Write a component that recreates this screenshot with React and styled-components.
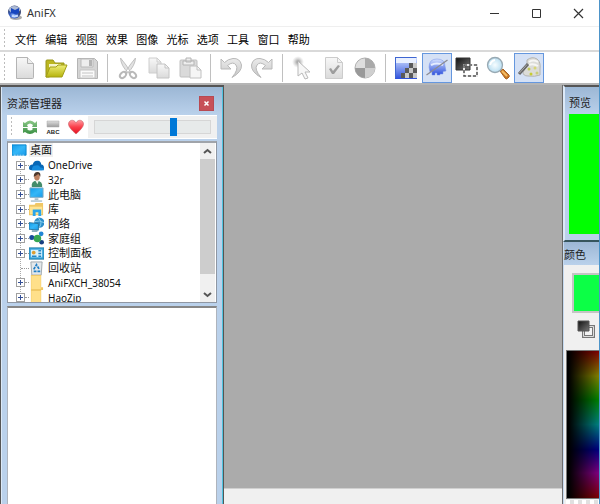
import React from "react";
import styled, { createGlobalStyle, css } from "styled-components";

const latin = '"Noto Sans", "Noto Sans CJK SC", sans-serif';

const GlobalStyle = createGlobalStyle`
  *, *::before, *::after { box-sizing: border-box; }
  html, body, #root { height: 100%; }
  body {
    margin: 0;
    overflow: hidden;
    background: #fff;
    color: #111;
    font: 11px/14px ${latin};
  }
  button, input { margin: 0; padding: 0; border: 0; font: inherit; color: inherit; background: none; }
  ul { margin: 0; padding: 0; list-style: none; }
  h1, h2 { margin: 0; font-size: 11px; font-weight: 400; }
  svg { display: block; flex: none; }
`;

const Window = styled.div`
  height: 100vh;
  display: flex;
  flex-direction: column;
  border-right: 1px solid #4d94c9;
  overflow: hidden;
`;

const TitleBar = styled.header`
  flex: none;
  height: 27px;
  display: flex;
  align-items: center;
  padding-left: 7px;
  border-bottom: 1px solid #efefef;
`;

const AppTitle = styled.h1`
  flex: 1;
  padding-left: 4px;
  line-height: 24px;
  color: #333;
`;

const CaptionButton = styled.button`
  width: 42px;
  height: 24px;
  display: grid;
  place-items: center;
  color: #333;
`;

const Grip = styled.span`
  flex: none;
  width: 1px;
  align-self: stretch;
  margin: 2px 1px 2px 0;
  background: repeating-linear-gradient(#bcbcbc 0 2px, transparent 2px 4px);
`;

const MenuBar = styled.nav`
  flex: none;
  height: 25px;
  display: flex;
  align-items: center;
  padding-left: 4px;
  border-bottom: 2px solid #d9d9d9;
`;

const MenuList = styled.ul`
  width: 303px;
  margin-left: 9px;
  padding-top: 2px;
  display: grid;
  grid-template-columns: repeat(10, 1fr);
`;

const MenuButton = styled.button`
  line-height: 20px;
  white-space: nowrap;
  color: #000;
`;

const ToolBar = styled.div`
  flex: none;
  height: 33px;
  display: flex;
  align-items: center;
  padding-left: 4px;
  border-bottom: 2px solid #b5b5b5;
`;

const ToolGroup = styled.div`
  width: ${(p) => p.$width}px;
  display: grid;
  grid-template-columns: repeat(${(p) => p.$count}, 1fr);
  justify-items: center;
  &:nth-child(2) { margin-left: 4px; }
`;

const ToolButton = styled.button`
  width: 30px;
  height: 30px;
  display: grid;
  place-items: center;
  border: 1px solid transparent;
  ${(p) => p.$pressed && css`
    background: #d5e1f5;
    border-color: #6597de;
  `}
`;

const Separator = styled.span`
  width: 1px;
  height: 28px;
  margin: 0 5px;
  background: #c0c0c0;
`;

const Workspace = styled.div`
  flex: 1;
  min-height: 0;
  display: flex;
`;

const Explorer = styled.aside`
  flex: none;
  width: 224px;
  display: flex;
  flex-direction: column;
  padding: 0 6px;
  background: linear-gradient(#9cb7d5, #bad1eb 28px);
  border: 1px solid #555;
  border-width: 2px 1px 0 1px;
  box-shadow: inset 1px 0 #dce9f7, inset -1px 0 #4fc3df;
`;

const PanelHeader = styled.div`
  flex: none;
  height: ${(p) => p.$height}px;
  display: flex;
  align-items: center;
  justify-content: space-between;
  padding: 5px 3px 0 0;
`;

const PanelTitle = styled.h2`
  white-space: nowrap;
  color: #222;
`;

const CloseButton = styled.button`
  width: 15px;
  height: 15px;
  display: grid;
  place-items: center;
  background: #c75058;
  border: 1px solid #b84952;
`;

const ExplorerTools = styled.div`
  flex: none;
  height: 24px;
  display: flex;
  align-items: center;
  padding-left: 4px;
  background: #fff;
`;

const SmallTool = styled.button`
  width: 23px;
  height: 22px;
  display: grid;
  place-items: center;
  &:nth-of-type(1) { margin-left: 5px; }
`;

const SizeField = styled.label`
  flex: 1;
  height: 22px;
  display: flex;
  align-items: center;
  margin-left: 1px;
  padding: 0 6px;
  background: #f0f0f0;
`;

const Slider = styled.input`
  width: 100%;
  height: 18px;
  appearance: none;
  &::-webkit-slider-runnable-track {
    height: 14px;
    background: #e7eaea;
    border: 1px solid #d6d6d6;
  }
  &::-webkit-slider-thumb {
    appearance: none;
    width: 7px;
    height: 18px;
    margin-top: -3px;
    background: #0078d7;
  }
`;

const TreeBox = styled.div`
  flex: none;
  height: 162px;
  margin-top: 2px;
  display: flex;
  background: #fff;
  border: 1px solid #8f97a3;
  border-top: 2px solid #a0a4aa;
  overflow: hidden;
`;

const Tree = styled.ul`
  flex: 1;
  height: 162px;
  display: grid;
  grid-template-rows: repeat(11, 1fr);
  background: linear-gradient(#fff, #fff) 0 0 / 100% 15px no-repeat,
    repeating-linear-gradient(#aaa 0 1px, transparent 1px 2px) 12px 0 / 1px 100% no-repeat;
`;

const TreeItem = styled.li`
  display: flex;
  align-items: center;
  min-height: 0;
  padding-left: ${(p) => (p.$root ? 4 : 8)}px;
`;

const Expander = styled.button`
  flex: none;
  width: 9px;
  height: 9px;
  display: grid;
  place-items: center;
  background: ${(p) => (p.$leaf ? "none" : "#fff")};
  border: 1px solid ${(p) => (p.$leaf ? "transparent" : "#a0a0a0")};
`;

const Branch = styled.span`
  width: ${(p) => (p.$leaf ? 8 : 4)}px;
  margin-left: ${(p) => (p.$leaf ? -4 : 0)}px;
  border-top: 1px dotted #999;
`;

const TreeLabel = styled.span`
  margin-left: ${(p) => (p.$root ? 2 : 3)}px;
  padding: 0 1px;
  white-space: nowrap;
  color: #111;
  font-size: ${(p) => (p.$latin ? 10 : 11)}px;
  background: ${(p) => (p.$root ? "#f0f0f0" : "none")};
`;

const ScrollBar = styled.div`
  flex: none;
  width: 15px;
  display: flex;
  flex-direction: column;
  margin-right: 1px;
  background: #f0f0f0;
`;

const ScrollArrow = styled.button`
  height: 16px;
  display: grid;
  place-items: center;
`;

const ScrollTrack = styled.div`
  flex: 1;
  display: flex;
  padding-bottom: 12px;
`;

const ScrollThumb = styled.span`
  flex: 1;
  background: #cdcdcd;
`;

const FileList = styled.section`
  flex: 1;
  margin-top: 3px;
  background: #fff;
  border: 1px solid #aeb4bd;
  border-top: 2px solid #868686;
  border-bottom: 0;
`;

const Canvas = styled.main`
  flex: 1;
  display: flex;
  flex-direction: column;
  justify-content: flex-end;
  background: #ababab;
`;

const StatusBar = styled.footer`
  height: 16px;
  background: #f0f0f0;
  border-top: 1px solid #d0d0d0;
`;

const Dock = styled.aside`
  flex: none;
  width: 37px;
  display: flex;
  flex-direction: column;
  border-left: 1px solid #6c6c6c;
  overflow: hidden;
`;

const PreviewPanel = styled.section`
  flex: none;
  height: 157px;
  display: flex;
  flex-direction: column;
  padding: 0 0 6px 4px;
  background: linear-gradient(#9cb7d5, #bad1eb 28px);
  border-top: 2px solid #555;
  border-bottom: 2px solid #36555d;
  border-left: 2px solid #dce9f7;
`;

const PreviewSurface = styled.div`
  flex: 1;
  background: #00ff00;
`;

const ColorPanel = styled.section`
  flex: 1;
  display: flex;
  flex-direction: column;
  background: #f0f0f0;
  border-left: 1px solid #c6daf0;
`;

const ColorHeader = styled.div`
  flex: none;
  height: 23px;
  padding-top: 6px;
  background: linear-gradient(#9cb7d5, #bad1eb);
`;

const Swatch = styled.button`
  flex: none;
  height: 40px;
  margin: 8px 0 0 8px;
  background: #0cff46;
  border: 2px solid #c4c4c4;
  border-right: 0;
`;

const SwapButton = styled.button`
  align-self: flex-start;
  margin: 6px 0 11px 12px;
`;

const Spectrum = styled.div`
  flex: none;
  height: 149px;
  margin-left: 2px;
  border: 1px solid #777;
  border-right: 0;
  background: linear-gradient(to right, #000 5%, rgba(0, 0, 0, 0.5)),
    linear-gradient(#f00, #ff0 17%, #0f0 33%, #0ff 50%, #00f 67%, #f0f 83%, #f00);
`;

const AlphaStrip = styled.div`
  flex: 1;
  margin: 1px 0 0 2px;
  background: repeating-conic-gradient(#e0e0e0 0 25%, #fff 0 50%) 0 0 / 8px 8px;
`;

const HiddenDefs = styled.svg`
  position: absolute;
`;

const Svg = ({ size = 24, box = 24, children }) => (
  <svg width={size} height={size} viewBox={`0 0 ${box} ${box}`} fill="none" aria-hidden="true">
    {children}
  </svg>
);

const Gradients = () => (
  <HiddenDefs width="0" height="0" aria-hidden="true">
    <defs>
      <linearGradient id="gray" x2="0" y2="1"><stop stopColor="#f8f8f8" /><stop offset="1" stopColor="#dadada" /></linearGradient>
      <linearGradient id="arrow" x2="0" y2="1"><stop stopColor="#ececec" /><stop offset="1" stopColor="#c4c4c4" /></linearGradient>
      <linearGradient id="darkgray" x2="0" y2="1"><stop stopColor="#dedede" /><stop offset="1" stopColor="#9c9c9c" /></linearGradient>
      <linearGradient id="yellow" x2="0" y2="1"><stop stopColor="#efef78" /><stop offset="1" stopColor="#b6b30c" /></linearGradient>
      <linearGradient id="blue" x2="0" y2="1"><stop stopColor="#d5e2ff" /><stop offset="1" stopColor="#2d50dc" /></linearGradient>
      <linearGradient id="ink" x2="1" y2="1"><stop stopColor="#111" /><stop offset="1" stopColor="#777" /></linearGradient>
      <linearGradient id="sky" x2="1" y2="1"><stop stopColor="#139bea" /><stop offset=".5" stopColor="#35b7f7" /><stop offset="1" stopColor="#1a9aea" /></linearGradient>
      <linearGradient id="heart" x2="0" y2="1"><stop stopColor="#ff9ca2" /><stop offset=".5" stopColor="#fa3e49" /><stop offset="1" stopColor="#e31423" /></linearGradient>
      <linearGradient id="green" x2="0" y2="1"><stop stopColor="#8cc888" /><stop offset="1" stopColor="#3a9044" /></linearGradient>
      <radialGradient id="ball" cx=".4" cy=".75"><stop stopColor="#a4c6ff" /><stop offset=".5" stopColor="#315cc8" /><stop offset="1" stopColor="#3b4a78" /></radialGradient>
      <radialGradient id="lens"><stop stopColor="#f7fdff" /><stop offset="1" stopColor="#badff2" /></radialGradient>
      <radialGradient id="spot"><stop stopColor="#666" stopOpacity=".75" /><stop offset="1" stopColor="#aaa" stopOpacity="0" /></radialGradient>
    </defs>
  </HiddenDefs>
);

const Logo = () => (
  <Svg size={16} box={16}>
    <ellipse cx="9" cy="12.500" rx="6" ry="2.500" fill="#aaa" />
    <circle cx="7.500" cy="7" r="6.500" fill="url(#ball)" />
    <path d="M1.500 5Q3 1 7 1q5 0 6.500 4L11 7.500H4z" fill="#b9c6df" opacity=".9" />
    <path d="M4 3l4 2 4-2v5l-4 1-4-1z" fill="#1746bf" />
    <path d="M5 11q3 1 6-.500" stroke="#c6dcff" strokeWidth="2" />
  </Svg>
);

const toolIcons = {
  new: <><path d="M3.500 1.500h11l6 6v14q0 1-1 1h-16z" fill="url(#gray)" stroke="#b4b4b4" /><path d="M14.500 1.500v6h6" fill="#eee" stroke="#b4b4b4" /></>,
  open: <><path d="M2 21V5q0-1 1-1h6l2 3h9v5L5 21z" fill="#bbb620" stroke="#99961a" /><path d="M5 8h12v5H5z" fill="#f5f5c8" /><path d="M2 21l4-10h6l2-2h9l-5 12z" fill="url(#yellow)" stroke="#a29e18" /></>,
  save: <><path d="M2.500 2.500h17l3 3v17h-20z" fill="#d5d5d5" stroke="#b4b4b4" /><path d="M6 3h12v8H6z" fill="#eee" stroke="#bbb" /><path d="M14 4h3v6h-3z" fill="#b4b4b4" /><path d="M5 14h15v8H5z" fill="#fafafa" stroke="#c4c4c4" /><path d="M7 17h11M7 20h11" stroke="#c4c4c4" /></>,
  cut: <><path d="M4.500 2q6 7 10 14l-2 1Q5 10 4.500 2zM19.500 2q-6 7-10 14l2 1Q19 10 19.500 2z" fill="#e2e2e2" stroke="#c0c0c0" /><ellipse cx="7" cy="19" rx="3.500" ry="2.500" transform="rotate(-45 7 19)" stroke="#b9b9b9" strokeWidth="2" /><ellipse cx="17" cy="19" rx="3.500" ry="2.500" transform="rotate(45 17 19)" stroke="#b9b9b9" strokeWidth="2" /></>,
  copy: <><path d="M2 2h8l4 4v11H2z" fill="url(#gray)" stroke="#cecece" /><path d="M10 2v4h4" stroke="#cecece" /><path d="M10 8h8l4 4v10H10z" fill="url(#gray)" stroke="#c4c4c4" /><path d="M18 8v4h4" stroke="#c4c4c4" /></>,
  paste: <><rect x="2" y="4" width="17" height="17" rx="1" fill="#dadada" stroke="#c0c0c0" /><path d="M5 5h11v4H5zM8 2h5v4H8z" fill="#eee" stroke="#b4b4b4" /><path d="M12 10h7l4 4v8H12z" fill="#f5f5f5" stroke="#c0c0c0" /><path d="M19 10v4h4" stroke="#c0c0c0" /></>,
  undo: <path d="M2 3v10h10L8.500 9.500Q14 5 17 9q3 4-4 12.500Q23 16 22.500 9 21 2 14 2.500 9 3 5.500 6.500z" fill="url(#arrow)" stroke="#b9b9b9" />,
  redo: <path d="M22 3v10H12l3.500-3.500Q10 5 7 9q-3 4 4 12.500Q1 16 1.500 9 3 2 10 2.500q5 .5 8.500 4z" fill="url(#arrow)" stroke="#b9b9b9" />,
  pointer: <><circle cx="7" cy="6" r="6" fill="url(#spot)" /><path d="M7 5v15l4-3 3 6 3-1-3-6h5z" fill="#f7f7f7" stroke="#b9b9b9" /></>,
  check: <><path d="M3.500 1.500h12l5 5v16h-17z" fill="url(#gray)" stroke="#ccc" /><path d="M15.500 1.500v5h5" stroke="#ccc" /><path d="M7 13l2-1 2 3 5-6 2 1-6 8h-2z" fill="#9d9d9d" /></>,
  disc: <><circle cx="12" cy="12" r="10" fill="#dedede" stroke="#b0b0b0" /><path d="M12 2v10h10A10 10 0 0 0 12 2z" fill="#aaa" /><path d="M12 12h10a10 10 0 0 1-10 10z" fill="#cfcfcf" /><path d="M12 12H2a10 10 0 0 0 10 10z" fill="#999" /></>,
  gradient: <><path d="M1 1h22v22H1z" fill="url(#blue)" /><path d="M2 2h20v5H2z" fill="#e9f0ff" /><path d="M1.500 1.500h21M1.500 1v21" stroke="#3f66d2" /><path d="M7 22v-5h4v-5h4V7h8v15z" fill="#a8a8a8" /><path d="M15 7h4v5h-4zM11 12h4v5h-4zM7 17h4v5H7zM19 12h4v5h-4zM15 17h4v5h-4z" fill="#5a5a5a" /><path d="M19 7h4v5h-4zM15 12h4v5h-4zM11 17h4v5h-4zM19 17h4v5h-4z" fill="#c8c8c8" /></>,
  smooth: <><path d="M4 11q0-8 8-8 8 0 8 7l1 5-3 .500V18h-3v1h-3v-2h-2v2H7v-3H5z" fill="url(#blue)" stroke="#7894e8" strokeWidth=".5" /><path d="M6 9q6-3 12 0" stroke="#e5edff" strokeWidth="2" /><path d="M1.500 19L22.500 4" stroke="#8b8b93" strokeWidth="1.300" /></>,
  selection: <><path d="M1 2h14v12H1z" fill="url(#ink)" stroke="#333" /><path d="M9 9h13v11H9z" stroke="#e8e8e8" strokeWidth="2" /><path d="M9 9h13v11H9z" stroke="#555" strokeWidth="1.500" strokeDasharray="3 2" /></>,
  zoom: <><path d="M14 15l3-2 6 6q1 2-1 3-2 2-3 0z" fill="#ca7724" stroke="#a56123" /><path d="M16 15l5 5" stroke="#f2bb64" strokeWidth="2" /><circle cx="9" cy="9" r="7.500" fill="url(#lens)" stroke="#98a9b3" strokeWidth="1.300" /><path d="M4 9q1-4 5-5" stroke="#fff" strokeWidth="2" /></>,
  effects: <><path d="M10 4q5-4 10-1 4 3 3 10v6q-5 2-12 1-5 0-5-4l4-6z" fill="#dcdcd8" stroke="#b4b4b0" /><path d="M12 6q4-3 9 0M12 9q4-2 9 1" stroke="#f6f6f4" strokeWidth="2" /><path d="M2 18L11 8" stroke="#666" strokeWidth="3" /><path d="M2.500 17L10 8.500" stroke="#aaa" /><circle cx="12" cy="13" r="1.500" fill="#c3c85a" /><circle cx="18" cy="12" r="1.500" fill="#d7d676" /><circle cx="14" cy="18" r="1.500" fill="#c6cc32" /><circle cx="20" cy="17" r="1.500" fill="#c9cc7a" /></>,
};

const toolGroups = [
  { width: 92, tools: [["new", "新建"], ["open", "打开"], ["save", "保存"]] },
  { width: 92, tools: [["cut", "剪切"], ["copy", "复制"], ["paste", "粘贴"]] },
  { width: 61, tools: [["undo", "撤销"], ["redo", "重做"]] },
  { width: 92, tools: [["pointer", "热点"], ["check", "测试"], ["disc", "对比"]] },
  { width: 153, tools: [["gradient", "渐变"], ["smooth", "平滑", true], ["selection", "选区"], ["zoom", "缩放"], ["effects", "特效", true]] },
];

const treeIcons = {
  desktop: <><path d="M0 2h15v11H0z" fill="url(#sky)" stroke="#0786cf" /><path d="M2 13h11" stroke="#c4eaff" strokeDasharray="2 1" /></>,
  cloud: <><path d="M0 11q0-4 4-4 1-5 6-4 3 1 3 4 3 0 3 4 0 2-2 2H3q-3 0-3-2z" fill="#0767b6" /><path d="M3 13q0-5 4-5 4-1 5 2 4 0 4 3z" fill="#168bdd" /></>,
  user: <><path d="M3 16q-1-6 5-7 7 1 6 7z" fill="#438c6b" /><path d="M6 8l3 5 2-5z" fill="#edf5ef" /><ellipse cx="8.500" cy="5" rx="3" ry="4" fill="#bd8160" /><path d="M5 5q0-5 4-5t3 5l-2-3q-3 2-5 3z" fill="#4c382c" /></>,
  computer: <><path d="M1 1h14v10H1z" fill="url(#sky)" stroke="#7fa9c1" /><path d="M6 12h4v2H6z" fill="#a9bcc7" /><path d="M2 15h12" stroke="#a8bfcd" strokeWidth="1.500" /></>,
  library: <><path d="M0 3h6l1-2h8v13H0z" fill="#f0c765" /><path d="M1 5h13v8H1z" fill="#ffe493" /><path d="M4 15V8h9v7h-3v-4H7v4z" fill="#2aa5ea" /></>,
  network: <><circle cx="11" cy="6" r="5.500" fill="#2c8eca" /><path d="M6 5q5-2 10 1M10 1q5 5 1 10" stroke="#8bd0ed" /><path d="M0 6l10 1v7l-10-1z" fill="url(#sky)" stroke="#2876a1" /><path d="M3 15h6" stroke="#6795ac" strokeWidth="1.500" /></>,
  homegroup: <><circle cx="3" cy="7" r="2.700" fill="#174b9c" /><circle cx="13" cy="3" r="2.500" fill="#2386d5" /><circle cx="13.500" cy="12" r="2.500" fill="#173f82" /><circle cx="9" cy="8" r="4" fill="#35a653" /></>,
  control: <><path d="M0 2h16v12H0z" fill="#38a7df" stroke="#247da8" /><path d="M2 4h12v8H2z" fill="#d8f2fd" /><circle cx="5" cy="7" r="2" fill="#dd9e34" /><path d="M3 11h5M10 5h3M10 8h3M10 11h3" stroke="#2484c4" strokeWidth="1.500" /></>,
  recycle: <><path d="M2 1h12l-1 14H3z" fill="#e4e8eb" stroke="#9ea6ab" /><path d="M5 9l3-5 3 5M5 11h7" stroke="#217fc6" strokeWidth="1.800" strokeDasharray="3 1" /></>,
  folder: <><path d="M2 0h11v13h2v3H2z" fill="#f0c765" /><path d="M2.500 1h10v14h-10z" fill="#ffe08a" /></>,
};

const treeItems = [
  { icon: "desktop", label: "桌面", root: true },
  { icon: "cloud", label: "OneDrive", latin: true },
  { icon: "user", label: "32r", latin: true },
  { icon: "computer", label: "此电脑" },
  { icon: "library", label: "库" },
  { icon: "network", label: "网络" },
  { icon: "homegroup", label: "家庭组" },
  { icon: "control", label: "控制面板" },
  { icon: "recycle", label: "回收站", leaf: true },
  { icon: "folder", label: "AniFXCH_38054", latin: true },
  { icon: "folder", label: "HaoZip", latin: true },
];

const menus = ["文件", "编辑", "视图", "效果", "图像", "光标", "选项", "工具", "窗口", "帮助"];

export default function App() {
  return (
    <Window>
      <GlobalStyle />
      <Gradients />
      <TitleBar>
        <Logo />
        <AppTitle>AniFX</AppTitle>
        <CaptionButton aria-label="最小化"><Svg size={11} box={11}><path d="M1 5.500h9" stroke="currentColor" /></Svg></CaptionButton>
        <CaptionButton aria-label="最大化"><Svg size={11} box={11}><path d="M1.500 1.500h8v8h-8z" stroke="currentColor" /></Svg></CaptionButton>
        <CaptionButton aria-label="关闭"><Svg size={11} box={11}><path d="M1 1l9 9M10 1l-9 9" stroke="currentColor" strokeWidth="1.200" /></Svg></CaptionButton>
      </TitleBar>

      <MenuBar>
        <Grip />
        <MenuList>
          {menus.map((m) => <li key={m}><MenuButton>{m}</MenuButton></li>)}
        </MenuList>
      </MenuBar>

      <ToolBar role="toolbar">
        <Grip />
        {toolGroups.map((group, i) => (
          <React.Fragment key={i}>
            {i > 0 && <Separator />}
            <ToolGroup $width={group.width} $count={group.tools.length}>
              {group.tools.map(([icon, label, pressed]) => (
                <ToolButton key={icon} aria-label={label} $pressed={pressed}>
                  <Svg>{toolIcons[icon]}</Svg>
                </ToolButton>
              ))}
            </ToolGroup>
          </React.Fragment>
        ))}
      </ToolBar>

      <Workspace>
        <Explorer>
          <PanelHeader $height={28}>
            <PanelTitle>资源管理器</PanelTitle>
            <CloseButton aria-label="关闭面板"><Svg size={7} box={7}><path d="M1.500 1.500l4 4M5.500 1.500l-4 4" stroke="#fff" strokeWidth="1.500" /></Svg></CloseButton>
          </PanelHeader>
          <ExplorerTools>
            <Grip />
            <SmallTool aria-label="刷新">
              <Svg size={14} box={14}><path d="M0 7V2l2 1q5-5 10 0l2-2v6H9l1-2Q7 2 4 5l1 2zM14 8v5l-2-1q-5 4-10 0l-2 1V8h5L4 9q3 3 6 0L9 8z" fill="url(#green)" /></Svg>
            </SmallTool>
            <SmallTool aria-label="名称">
              <Svg size={14} box={14}><path d="M1 1h12v6H1z" fill="url(#darkgray)" stroke="#aaa" strokeWidth=".5" /><text x="7" y="13.500" textAnchor="middle" fontFamily="Liberation Sans, sans-serif" fontWeight="700" fontSize="6" fill="#222">ABC</text></Svg>
            </SmallTool>
            <SmallTool aria-label="收藏">
              <Svg size={16} box={16}><path d="M8 15Q1 9 .5 5.500C0 1 6-.500 8 4c2-4.500 8-3 7.500 1.500Q15 9 8 15z" fill="url(#heart)" stroke="#c96066" strokeWidth=".6" /></Svg>
            </SmallTool>
            <SizeField>
              <Slider type="range" min="0" max="100" defaultValue="69" aria-label="缩略图大小" />
            </SizeField>
          </ExplorerTools>
          <TreeBox>
            <Tree>
              {treeItems.map((item) => (
                <TreeItem key={item.label} $root={item.root}>
                  {!item.root && (
                    <>
                      <Expander as={item.leaf ? "span" : "button"} $leaf={item.leaf} aria-label={item.leaf ? undefined : `展开 ${item.label}`}>
                        {!item.leaf && <Svg size={5} box={5}><path d="M0 2.500h5M2.500 0v5" stroke="#344f95" /></Svg>}
                      </Expander>
                      <Branch $leaf={item.leaf} />
                    </>
                  )}
                  <Svg size={15} box={16}>{treeIcons[item.icon]}</Svg>
                  <TreeLabel $root={item.root} $latin={item.latin}>{item.label}</TreeLabel>
                </TreeItem>
              ))}
            </Tree>
            <ScrollBar>
              <ScrollArrow aria-label="向上滚动"><Svg size={9} box={9}><path d="M1 6l3.500-3L8 6" stroke="#555" strokeWidth="2" /></Svg></ScrollArrow>
              <ScrollTrack><ScrollThumb /></ScrollTrack>
              <ScrollArrow aria-label="向下滚动"><Svg size={9} box={9}><path d="M1 3l3.500 3L8 3" stroke="#555" strokeWidth="2" /></Svg></ScrollArrow>
            </ScrollBar>
          </TreeBox>
          <FileList />
        </Explorer>

        <Canvas><StatusBar /></Canvas>

        <Dock>
          <PreviewPanel>
            <PanelHeader $height={27}><PanelTitle>预览</PanelTitle></PanelHeader>
            <PreviewSurface />
          </PreviewPanel>
          <ColorPanel>
            <ColorHeader><PanelTitle>颜色</PanelTitle></ColorHeader>
            <Swatch aria-label="当前颜色" />
            <SwapButton aria-label="交换颜色">
              <Svg size={20} box={20}><path d="M7.500 7.500h10v10h-10z" fill="#f4f4f4" stroke="#777" strokeWidth="3" /><path d="M7.500 7.500h10v10h-10z" stroke="#ddd" /><path d="M2 2h11v10H2z" fill="url(#ink)" stroke="#555" /></Svg>
            </SwapButton>
            <Spectrum />
            <AlphaStrip />
          </ColorPanel>
        </Dock>
      </Workspace>
    </Window>
  );
}
